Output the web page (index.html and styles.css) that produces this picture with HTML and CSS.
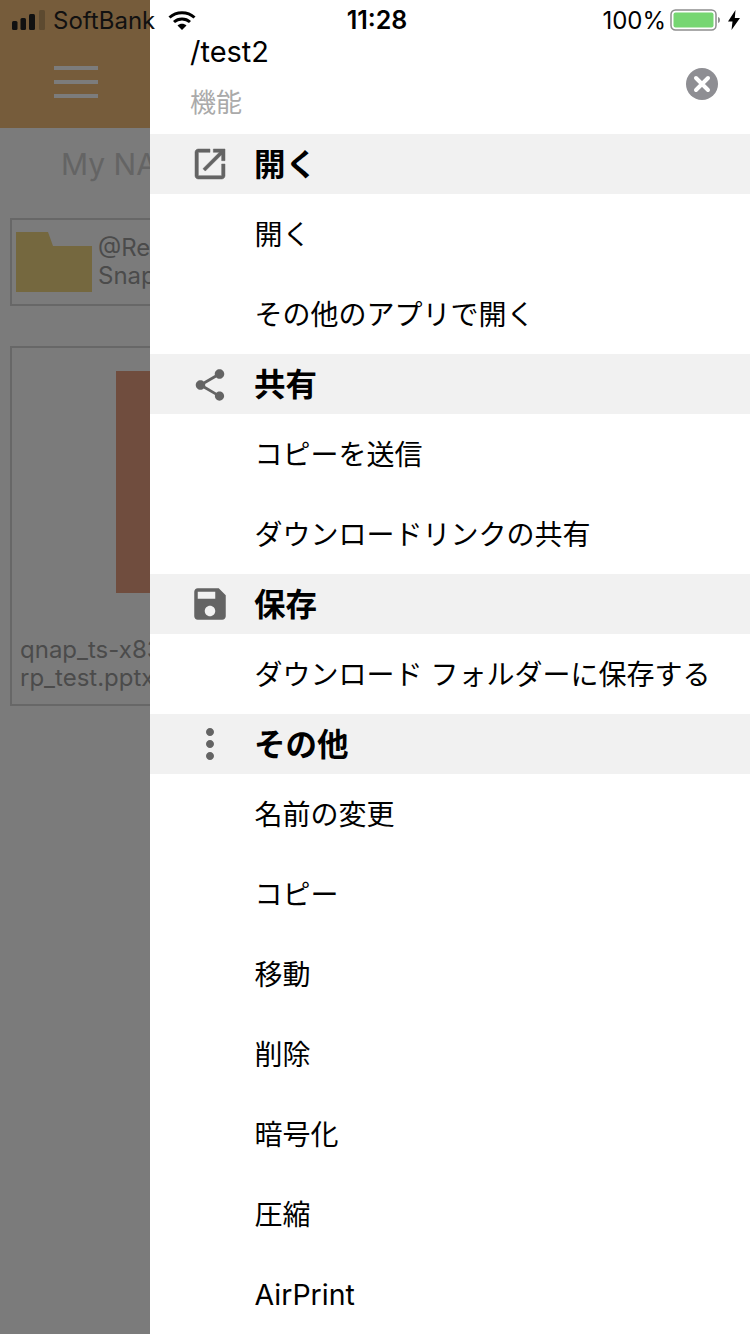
FILE: index.html
```html
<!DOCTYPE html>
<html lang="ja">

<head>
    <meta charset="UTF-8">
    <meta name="viewport" content="width=device-width, initial-scale=1.0">
    <title>/test2</title>
    <link rel="stylesheet" href="styles.css">
</head>

<body>
    <div class="screen">
        <!-- page behind the drawer, dimmed -->
        <div class="behind">
            <div class="behind-inner">
                <div class="app-bar">
                    <div class="burger"><span></span><span></span><span></span></div>
                </div>
                <div class="app-title">My NAS</div>
                <div class="card folder-card">
                    <svg class="folder" viewBox="0 0 76 60"><path d="M0 0h32l5 14h39v46H0z" /></svg>
                    <div class="card-name">@Recently-<br>Snapshot</div>
                </div>
                <div class="card file-card">
                    <div class="thumb"></div>
                    <div class="file-name">qnap_ts-x83xu-<br>rp_test.pptx</div>
                </div>
            </div>
        </div>

        <div class="drawer">
            <div class="drawer-head">
                <div>
                    <div class="path">/test2</div>
                    <div class="sub">機能</div>
                </div>
                <svg class="close" viewBox="0 0 32 32">
                    <circle cx="16" cy="16" r="16" fill="#8e8e93" />
                    <path d="M10 10l12 12M22 10L10 22" stroke="#fff" stroke-width="4" stroke-linecap="round" />
                </svg>
            </div>

            <div class="section">
                <span class="slot"><svg class="ic-open" viewBox="0 0 24 24"><path d="M19 19H5V5h7V3H5c-1.11 0-2 .9-2 2v14c0 1.1.89 2 2 2h14c1.1 0 2-.9 2-2v-7h-2v7zM14 3v2h3.59l-9.83 9.83 1.41 1.41L19 6.41V10h2V3h-7z" /></svg></span>
                <span class="section-title">開く</span>
            </div>
            <div class="row">開く</div>
            <div class="row">その他のアプリで開く</div>

            <div class="section">
                <span class="slot"><svg class="ic-share" viewBox="0 0 24 24"><path d="M18 16.08c-.76 0-1.44.3-1.96.77L8.91 12.7c.05-.23.09-.46.09-.7s-.04-.47-.09-.7l7.05-4.11c.54.5 1.25.81 2.04.81 1.66 0 3-1.34 3-3s-1.34-3-3-3-3 1.34-3 3c0 .24.04.47.09.7L8.04 9.81C7.5 9.31 6.79 9 6 9c-1.66 0-3 1.34-3 3s1.34 3 3 3c.79 0 1.5-.31 2.04-.81l7.12 4.16c-.05.21-.08.43-.08.65 0 1.61 1.31 2.92 2.92 2.92 1.61 0 2.92-1.31 2.92-2.92s-1.31-2.92-2.92-2.92z" /></svg></span>
                <span class="section-title">共有</span>
            </div>
            <div class="row">コピーを送信</div>
            <div class="row">ダウンロードリンクの共有</div>

            <div class="section">
                <span class="slot"><svg class="ic-save" viewBox="0 0 24 24"><path d="M17 3H5c-1.11 0-2 .9-2 2v14c0 1.1.89 2 2 2h14c1.1 0 2-.9 2-2V7l-4-4zm-5 16c-1.66 0-3-1.34-3-3s1.34-3 3-3 3 1.34 3 3-1.34 3-3 3zm3-10H5V5h10v4z" /></svg></span>
                <span class="section-title">保存</span>
            </div>
            <div class="row">ダウンロード フォルダーに保存する</div>

            <div class="section">
                <span class="slot"><svg class="ic-more" viewBox="0 0 24 24"><path d="M12 8c1.1 0 2-.9 2-2s-.9-2-2-2-2 .9-2 2 .9 2 2 2zm0 2c-1.1 0-2 .9-2 2s.9 2 2 2 2-.9 2-2-.9-2-2-2zm0 6c-1.1 0-2 .9-2 2s.9 2 2 2 2-.9 2-2-.9-2-2-2z" /></svg></span>
                <span class="section-title">その他</span>
            </div>
            <div class="row">名前の変更</div>
            <div class="row">コピー</div>
            <div class="row">移動</div>
            <div class="row">削除</div>
            <div class="row">暗号化</div>
            <div class="row">圧縮</div>
            <div class="row row-latin">AirPrint</div>
        </div>

        <!-- ios status bar sits over both -->
        <div class="status">
            <div class="status-left">
                <svg class="signal" viewBox="0 0 34 20">
                    <rect x="0" y="11" width="5.5" height="9" rx="1.5" fill="#111" />
                    <rect x="8.5" y="8" width="5.5" height="12" rx="1.5" fill="#111" />
                    <rect x="17" y="4" width="6" height="16" rx="1.5" fill="#111" />
                    <rect x="27" y="0" width="6" height="20" rx="1.5" fill="#5d4a30" />
                </svg>
                <span class="carrier">SoftBank</span>
                <svg class="wifi" viewBox="0 0 28 20">
                    <path d="M1.5 7.500C8.500 1 19.500 1 26.500 7.500" fill="none" stroke="#000" stroke-width="3" />
                    <path d="M6 12c4.500-4 11.500-4 16 0" fill="none" stroke="#000" stroke-width="3" />
                    <path d="M9.500 15.500c2.500-2.200 6.500-2.200 9 0L14 20z" fill="#000" />
                </svg>
            </div>
            <div class="clock">11:28</div>
            <div class="status-right">
                <span>100%</span>
                <svg class="battery" viewBox="0 0 50 22">
                    <rect x="1" y="1" width="45" height="20" rx="4.500" fill="none" stroke="#8e8e8e" stroke-width="1.500" />
                    <rect x="3.500" y="3.500" width="40" height="15" rx="2" fill="#76d672" />
                    <path d="M48 8c1.500.4 2 1.500 2 3s-.5 2.600-2 3z" fill="#8e8e8e" />
                </svg>
                <svg class="bolt" viewBox="0 0 12 20"><path d="M7.500 0L0 11.500h4.500L3.500 20 12 8H6.800z" /></svg>
            </div>
        </div>
    </div>
</body>

</html>
```

FILE: styles.css
```css
* {
    box-sizing: border-box;
}

html,
body {
    margin: 0;
    padding: 0;
}

body {
    width: 750px;
    height: 1334px;
    overflow: hidden;
    font-family: Inter, "Noto Sans CJK JP", sans-serif;
    color: #000;
}

.screen {
    position: relative;
    display: flex;
    width: 750px;
    height: 1334px;
}

/* left page */
.behind {
    width: 150px;
    height: 1334px;
    overflow: hidden;
    background: #7b7b7b;
}

.behind-inner {
    width: 375px;
}

.app-bar {
    height: 128px;
    padding: 66px 0 0 54px;
    background: #765c3b;
}

.burger {
    display: flex;
    flex-direction: column;
    gap: 10px;
    width: 44px;
}

.burger span {
    height: 4px;
    background: #7c7c7c;
}

.app-title {
    height: 72px;
    padding-left: 61px;
    font-size: 30px;
    line-height: 72px;
    color: #646464;
}

.card {
    width: 340px;
    margin-left: 10px;
    border: 2px solid #676767;
}

.folder-card {
    display: flex;
    align-items: center;
    gap: 6px;
    height: 88px;
    margin-top: 18px;
    padding-left: 4px;
}

.folder {
    width: 76px;
    height: 60px;
    fill: #75683f;
}

.card-name {
    font-size: 24px;
    line-height: 28px;
    color: #4b4b4b;
}

.file-card {
    height: 360px;
    margin-top: 40px;
    padding-top: 23px;
}

.thumb {
    width: 180px;
    height: 222px;
    margin-left: 104px;
    background: #704d3e;
}

.file-name {
    margin: 43px 0 0 8px;
    font-size: 24px;
    line-height: 28px;
    color: #4b4b4b;
}

/* drawer */
.drawer {
    width: 600px;
    height: 1334px;
    overflow: hidden;
    background: #fff;
}

.drawer-head {
    display: flex;
    justify-content: space-between;
    align-items: flex-start;
    height: 134px;
    padding: 32px 32px 0 40px;
}

.path {
    font-size: 29px;
    line-height: 40px;
}

.sub {
    margin-top: 14px;
    font-size: 26px;
    line-height: 34px;
    color: #aaa;
}

.close {
    width: 32px;
    height: 32px;
    margin-top: 36px;
}

.section {
    display: flex;
    align-items: center;
    height: 60px;
    background: #f1f1f1;
    font-size: 31.5px;
    font-weight: 700;
}

.section-title {
    padding-bottom: 4px;
}

.slot {
    display: flex;
    justify-content: center;
    align-items: center;
    width: 48px;
    margin: 0 20px 0 36px;
}

.slot svg {
    flex: none;
    fill: #646464;
}

.ic-open {
    width: 40px;
    height: 40px;
    margin-left: -1px;
    stroke: #646464;
    stroke-width: .3;
}

.ic-share {
    width: 38px;
    height: 38px;
    margin-top: 1px;
}

.ic-save {
    width: 42px;
    height: 42px;
}

.ic-more {
    width: 48px;
    height: 48px;
}

.row {
    display: flex;
    align-items: center;
    height: 80px;
    padding: 0 0 2px 104.5px;
    font-size: 28px;
}

.row-latin {
    padding-bottom: 0;
    font-size: 28.5px;
}

/* status bar */
.status {
    position: absolute;
    top: 0;
    left: 0;
    display: grid;
    grid-template-columns: 1fr auto 1fr;
    align-items: center;
    width: 750px;
    height: 40px;
    padding: 0 10px 0 12px;
    font-size: 24px;
}

.status-left {
    display: flex;
    align-items: center;
}

.signal {
    width: 34px;
    height: 20px;
}

.carrier {
    margin-left: 7px;
    color: #111;
}

.wifi {
    width: 28px;
    height: 20px;
    margin-left: 13px;
}

.clock {
    margin-left: 2px;
    font-size: 25px;
    font-weight: 600;
}

.status-right {
    display: flex;
    align-items: center;
    justify-content: flex-end;
}

.battery {
    width: 50px;
    height: 22px;
    margin-left: 4px;
}

.bolt {
    width: 12px;
    height: 20px;
    margin-left: 8px;
}
```
